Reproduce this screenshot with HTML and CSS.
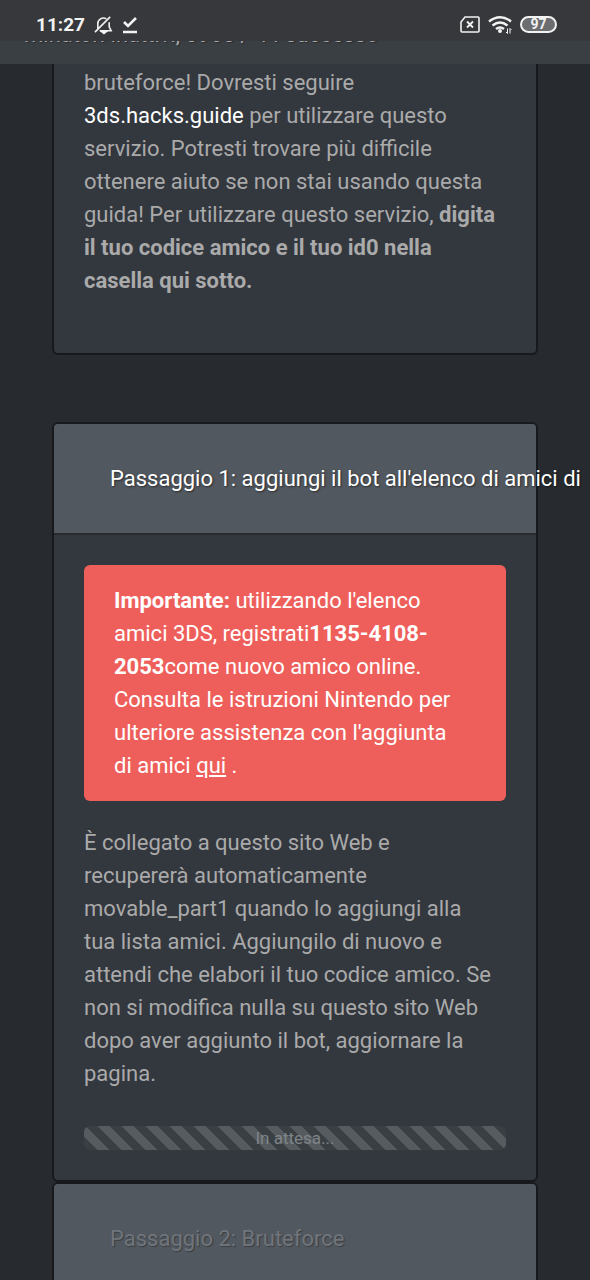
FILE: index.html
```html
<!DOCTYPE html>
<html lang="it">
<head>
<meta charset="utf-8">
<meta name="viewport" content="width=device-width, initial-scale=1">
<title>Bruteforce Movable</title>
<link rel="stylesheet" href="styles.css">
</head>
<body>
<header class="status">
  <div class="status-group">
    <span class="clock">11:27</span>
    <svg class="bell" viewBox="0 0 20 20" fill="none" stroke="currentColor" stroke-width="1.700" aria-hidden="true"><path d="M4 14V9a6 6 0 0 1 9-5.500M16 7v5l2 4H6M1 17.500 17 1.500"/><path d="M8 17h5l-2.500 2z" fill="currentColor"/></svg>
    <svg class="check" viewBox="0 0 16 18" fill="none" stroke="currentColor" stroke-width="2.600" aria-hidden="true"><path d="m2 6 4 4 8-8M1 16h14"/></svg>
  </div>
  <div class="status-group status-right">
    <svg class="sim" viewBox="0 0 20 17" fill="none" stroke="currentColor" stroke-width="1.600" aria-hidden="true"><path d="M5 1h13q1 0 1 1v13q0 1-1 1H2q-1 0-1-1V6z"/><path d="m7 5.500 6 6M13 5.500l-6 6" stroke-width="1.800"/></svg>
    <svg class="wifi" viewBox="0 0 24 18" fill="none" stroke="currentColor" stroke-width="2.400" aria-hidden="true"><path d="M1 5.500Q12-3 23 5.500M4.500 9.500q7.500-6 15 0M8 13q4-3.200 8 0"/><circle cx="12" cy="15" r="2" fill="currentColor" stroke="none"/><path d="M19.500 12.500v5l-1.500-1.500M22 17.500v-5l1.500 1.500" stroke-width="1"/></svg>
    <span class="battery">97</span>
  </div>
</header>
<nav class="navbar"><span class="navbar-text">minatori inattivi, 3960 / 44 successo</span></nav>
<main class="content">
  <section class="card intro">
    <p>bruteforce! Dovresti seguire<br><a class="guide" href="#">3ds.hacks.guide</a> per utilizzare questo<br>servizio. Potresti trovare più difficile<br>ottenere aiuto se non stai usando questa guida! Per utilizzare questo servizio, <b>digita<br>il tuo codice amico e il tuo id0 nella<br>casella qui sotto.</b></p>
  </section>
  <section class="card">
    <h2 class="card-header">Passaggio 1: aggiungi il bot all'elenco di amici di</h2>
    <div class="card-body">
      <div class="alert"><b>Importante:</b> utilizzando l'elenco<br>amici 3DS, registrati<b>1135-4108-<br>2053</b>come nuovo amico online.<br>Consulta le istruzioni Nintendo per<br>ulteriore assistenza con l'aggiunta<br>di amici <a href="#">qui</a> .</div>
      <p>È collegato a questo sito Web e<br>recupererà automaticamente<br>movable_part1 quando lo aggiungi alla<br>tua lista amici. Aggiungilo di nuovo e<br>attendi che elabori il tuo codice amico. Se<br>non si modifica nulla su questo sito Web<br>dopo aver aggiunto il bot, aggiornare la<br>pagina.</p>
      <div class="progress" role="progressbar" aria-label="In attesa">In attesa...</div>
    </div>
  </section>
  <section class="card">
    <h2 class="card-header disabled">Passaggio 2: Bruteforce</h2>
  </section>
</main>
</body>
</html>
```
FILE: styles.css
```css
* { box-sizing: border-box; }

html { background: #272b2f; }

body {
  margin: 0;
  background: #272b2f;
  color: #aaa;
  font-family: Roboto, "Liberation Sans", sans-serif;
  font-size: 22px;
  line-height: 33px;
}

p { margin: 0; }

.status {
  display: flex;
  align-items: center;
  justify-content: space-between;
  height: 41px;
  padding: 8px 33px 0 36px;
  background: #36383b;
  color: #f2f2f2;
}

.status-group { display: flex; align-items: center; gap: 9px; }
.status-right { gap: 8px; }
.clock { font-size: 19px; font-weight: 700; line-height: 24px; }
.bell { width: 19px; height: 20px; }
.check { width: 16px; height: 18px; }
.sim { width: 20px; height: 17px; }
.wifi { width: 24px; height: 18px; }

.battery {
  width: 37px;
  height: 17px;
  border: 2px solid #f2f2f2;
  border-radius: 9px;
  background: #6b6d70;
  font-size: 14px;
  font-weight: 700;
  line-height: 13px;
  text-align: center;
}

.navbar {
  display: flex;
  align-items: flex-end;
  height: 23px;
  padding: 0 24px 13px;
  overflow: hidden;
  background: #3a3f43;
  text-shadow: 1px 1px 1px rgba(0, 0, 0, .3);
}

.content { padding: 0 52px; }

.card {
  border: 2px solid #17191d;
  border-radius: 6px;
  background: #33373e;
}

.intro {
  margin-bottom: 67px;
  padding: 2px 30px 56px;
  border-top: 0;
  border-radius: 0 0 6px 6px;
}

.guide { color: #fff; text-decoration: none; }

.card-header {
  margin: 0;
  padding: 38px 56px;
  border-bottom: 2px solid #272b2f;
  border-radius: 4px 4px 0 0;
  background: #52585f;
  color: #fff;
  font-size: 22px;
  font-weight: 400;
  white-space: nowrap;
  text-shadow: 1px 1px 2px rgba(0, 0, 0, .5);
}

.disabled {
  color: #70757b;
  text-shadow: 1px 1px 1px rgba(0, 0, 0, .3);
}

.card-body {
  display: flex;
  flex-direction: column;
  gap: 25px;
  padding: 30px;
}

.alert {
  padding: 19px 30px;
  border-radius: 6px;
  background: #ee5f5b;
  color: #fff;
}

.alert a { color: #fff; }

.progress {
  height: 24px;
  margin-top: 11px;
  border-radius: 6px;
  background: #3a3f43 linear-gradient(45deg, #565b5f 25%, transparent 25%, transparent 50%, #565b5f 50%, #565b5f 75%, transparent 75%) 14px 0 / 24px 24px;
  color: #7f8488;
  font-size: 17px;
  line-height: 24px;
  text-align: center;
}
```
